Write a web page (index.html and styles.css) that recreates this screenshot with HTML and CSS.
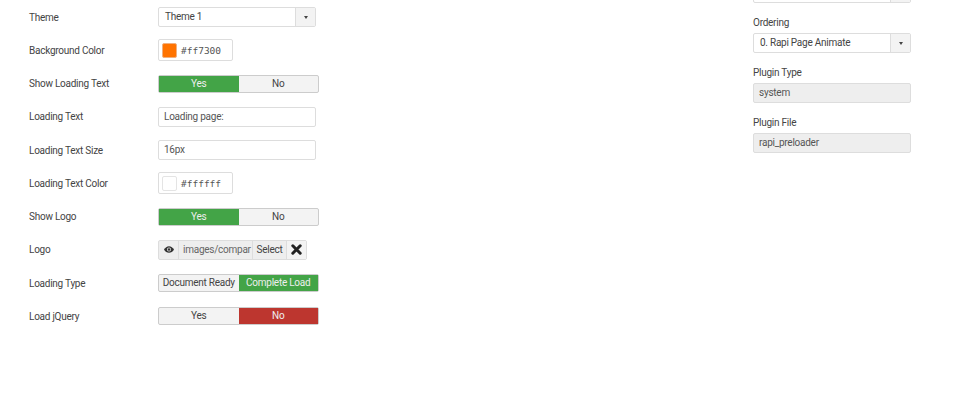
FILE: index.html
```html
<!DOCTYPE html>
<html lang="en">
<head>
    <meta charset="UTF-8">
    <title>Plugin options</title>
    <link rel="stylesheet" href="styles.css">
</head>
<body>

<div class="page">
    <div class="options">
        <div class="row">
            <label>Theme</label>
            <div class="select"><span class="select-value">Theme 1</span><span class="select-arrow"><i class="caret"></i></span></div>
        </div>
        <div class="row">
            <label>Background Color</label>
            <div class="color"><span class="swatch swatch-orange"></span><span class="color-value">#ff7300</span></div>
        </div>
        <div class="row">
            <label>Show Loading Text</label>
            <div class="toggle"><span class="green">Yes</span><span>No</span></div>
        </div>
        <div class="row">
            <label>Loading Text</label>
            <div class="input">Loading page:</div>
        </div>
        <div class="row">
            <label>Loading Text Size</label>
            <div class="input">16px</div>
        </div>
        <div class="row">
            <label>Loading Text Color</label>
            <div class="color"><span class="swatch"></span><span class="color-value">#ffffff</span></div>
        </div>
        <div class="row">
            <label>Show Logo</label>
            <div class="toggle"><span class="green">Yes</span><span>No</span></div>
        </div>
        <div class="row">
            <label>Logo</label>
            <div class="media">
                <span class="media-eye">
                    <svg width="10" height="7" viewBox="0 0 12 8"><path d="M0 4C1.500 1.500 3.500 0 6 0s4.500 1.500 6 4c-1.500 2.500-3.500 4-6 4S1.500 6.500 0 4z" fill="#333"/><circle cx="6" cy="4" r="2.400" fill="#eee"/><circle cx="6" cy="4" r="1.500" fill="#333"/></svg>
                </span>
                <span class="media-path">images/compar</span>
                <span class="media-select">Select</span>
                <span class="media-clear">
                    <svg width="11" height="11" viewBox="0 0 11 11"><path d="M1.800 1.800l7.400 7.400M9.200 1.800L1.800 9.200" stroke="#222" stroke-width="3" stroke-linecap="round"/></svg>
                </span>
            </div>
        </div>
        <div class="row">
            <label>Loading Type</label>
            <div class="toggle"><span class="tight">Document Ready</span><span class="green tight">Complete Load</span></div>
        </div>
        <div class="row">
            <label>Load jQuery</label>
            <div class="toggle"><span>Yes</span><span class="red">No</span></div>
        </div>
    </div>

    <div class="side">
        <div class="select"><span class="select-value"></span><span class="select-arrow"></span></div>
        <div class="field">
            <label>Ordering</label>
            <div class="select"><span class="select-value">0. Rapi Page Animate</span><span class="select-arrow"><i class="caret"></i></span></div>
        </div>
        <div class="field">
            <label>Plugin Type</label>
            <div class="input readonly">system</div>
        </div>
        <div class="field">
            <label>Plugin File</label>
            <div class="input readonly">rapi_preloader</div>
        </div>
    </div>
</div>

</body>
</html>
```

FILE: styles.css
```css
html, body {
    height: 100%;
}
body {
    margin: 0;
    background: #fff;
    font-family: Roboto, "Liberation Sans", sans-serif;
    font-size: 10px;
    letter-spacing: -0.25px;
    color: #444;
    overflow: hidden;
}
.page {
    display: flex;
    justify-content: space-between;
    padding-left: 29px;
    padding-right: 49px;
}
.options {
    padding-top: 0.6px;
}
.row {
    display: flex;
    align-items: center;
    height: 33.25px;
}
.row label {
    width: 129px;
}
.select {
    display: flex;
    width: 158px;
    height: 20px;
    box-sizing: border-box;
    border: 1px solid #ddd;
    border-radius: 2px;
    line-height: 18px;
}
.select-value {
    flex: 1;
    padding-left: 6px;
}
.select-arrow {
    display: flex;
    align-items: center;
    justify-content: center;
    width: 20px;
    box-sizing: border-box;
    background: #f3f3f3;
    border-left: 1px solid #ddd;
}
.caret {
    border-top: 3px solid #444;
    border-left: 2.500px solid transparent;
    border-right: 2.500px solid transparent;
}
.color {
    display: flex;
    align-items: center;
    width: 75px;
    height: 22px;
    box-sizing: border-box;
    border: 1px solid #ddd;
    border-radius: 2px;
}
.swatch {
    width: 15px;
    height: 15px;
    margin-left: 3px;
    border: 1px solid #e4e4e4;
    border-radius: 2px;
    box-sizing: border-box;
}
.swatch-orange {
    background: #ff7300;
    border-color: #f0b080;
}
.color-value {
    margin-left: 4px;
    font-family: "DejaVu Sans Mono", monospace;
    font-size: 9.500px;
    letter-spacing: 0;
    color: #555;
}
.toggle {
    display: flex;
    width: 161px;
    height: 18px;
    box-sizing: border-box;
    border: 1px solid #ccc;
    border-radius: 2px;
    line-height: 16px;
    text-align: center;
    background: #f3f3f3;
}
.toggle span {
    flex: 0 0 50%;
}
.toggle .green {
    background: #43a447;
    color: #eee;
}
.toggle .red {
    background: #bd362f;
    color: #eee;
}
.toggle .tight {
    white-space: nowrap;
}
.input {
    width: 158px;
    height: 20px;
    box-sizing: border-box;
    border: 1px solid #ddd;
    border-radius: 2px;
    padding-left: 5px;
    line-height: 18px;
    color: #555;
}
.readonly {
    background: #eee;
    border-color: #ddd;
}
.media {
    display: flex;
    height: 20px;
    box-sizing: border-box;
    border: 1px solid #ddd;
    border-radius: 2px;
    background: #eee;
    line-height: 18px;
}
.media span {
    display: flex;
    align-items: center;
    justify-content: center;
    border-left: 1px solid #ddd;
    box-sizing: border-box;
}
.media .media-eye {
    width: 19px;
    border-left: 0;
}
.media .media-path {
    width: 74px;
    padding: 0 4px;
    justify-content: flex-start;
    color: #666;
    overflow: hidden;
    white-space: nowrap;
}
.media-select {
    width: 34px;
}
.media-clear {
    width: 20px;
    background: #f3f3f3;
}
.side {
    width: 158px;
    margin-top: -17px;
}
.field {
    margin-top: 13px;
}
.field label {
    display: block;
    line-height: 13px;
    margin-bottom: 4px;
}
```
